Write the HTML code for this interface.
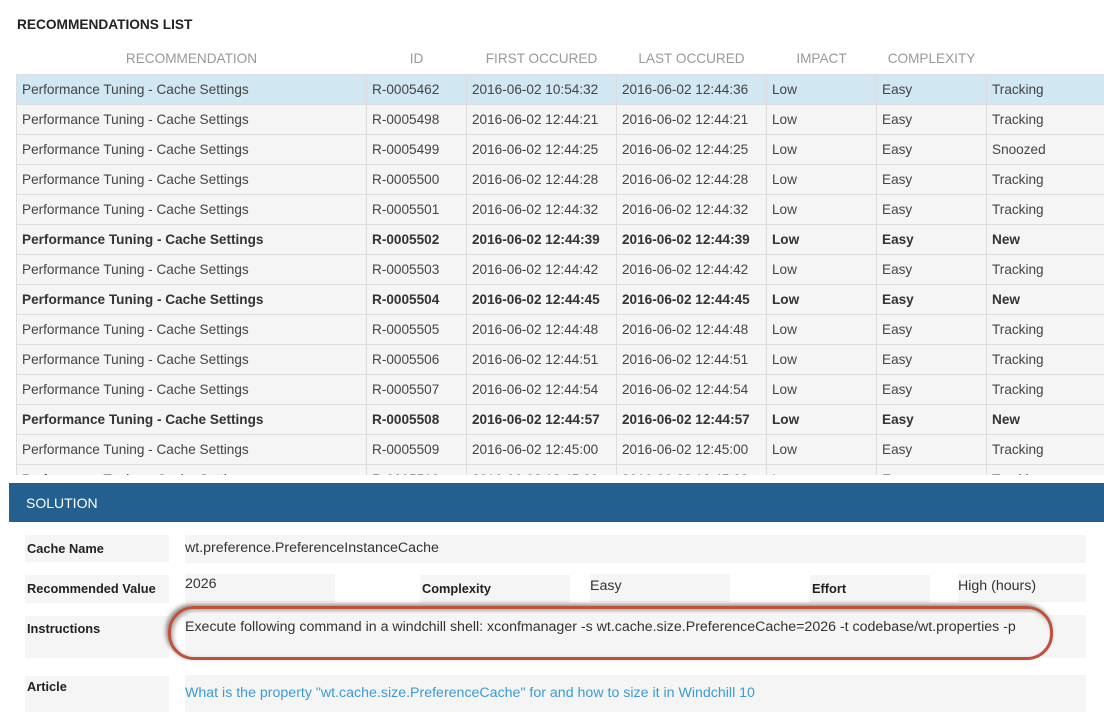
<!DOCTYPE html>
<html><head><meta charset="utf-8"><style>
*{margin:0;padding:0;box-sizing:border-box}
body{width:1104px;height:718px;background:#fff;font-family:"Liberation Sans",sans-serif;color:#333;position:relative;overflow:hidden}
.t{position:absolute;left:17px;top:17px;font-weight:bold;font-size:13.7px;color:#222}
.wrap{position:absolute;left:16px;top:44px;width:1088px;height:431px;overflow:hidden}
table{border-collapse:collapse;width:1088px;table-layout:fixed;font-size:13.6px}
th{font-weight:normal;color:#999;height:30px;text-align:center;font-size:13.6px}
td{height:30px;padding-left:5px;background:#f5f5f5;border:1px solid #ddd;color:#444;white-space:nowrap;overflow:hidden}
tr.sel td{background:#d1e7f1}
tr.b td{font-weight:bold;color:#333}
.bar{position:absolute;left:9px;top:483px;width:1095px;height:39px;background:#23608f;color:#fff;font-size:14px;padding:12px 0 0 17px}
.box{position:absolute;background:#f5f5f5;font-size:14.2px;color:#333;white-space:nowrap}
.lb{font-weight:bold;font-size:12.8px;color:#222;padding-left:2px}
a{color:#3a9bd5;text-decoration:none}
.oval{position:absolute;left:168px;top:606px;width:885px;height:54px;border:3px solid #c0503a;border-radius:26px;box-shadow:-2px -2px 4px rgba(0,0,0,.45),inset 2px 2px 4px rgba(0,0,0,.35)}
</style></head><body>
<div class="t">RECOMMENDATIONS LIST</div>
<div class="wrap"><table>
<colgroup><col style="width:350px"><col style="width:100px"><col style="width:150px"><col style="width:150px"><col style="width:110px"><col style="width:110px"><col style="width:118px"></colgroup>
<tr><th>RECOMMENDATION</th><th>ID</th><th>FIRST OCCURED</th><th>LAST OCCURED</th><th>IMPACT</th><th>COMPLEXITY</th><th></th></tr>
<tr class="sel"><td>Performance Tuning - Cache Settings</td><td>R-0005462</td><td>2016-06-02 10:54:32</td><td>2016-06-02 12:44:36</td><td>Low</td><td>Easy</td><td>Tracking</td></tr>
<tr><td>Performance Tuning - Cache Settings</td><td>R-0005498</td><td>2016-06-02 12:44:21</td><td>2016-06-02 12:44:21</td><td>Low</td><td>Easy</td><td>Tracking</td></tr>
<tr><td>Performance Tuning - Cache Settings</td><td>R-0005499</td><td>2016-06-02 12:44:25</td><td>2016-06-02 12:44:25</td><td>Low</td><td>Easy</td><td>Snoozed</td></tr>
<tr><td>Performance Tuning - Cache Settings</td><td>R-0005500</td><td>2016-06-02 12:44:28</td><td>2016-06-02 12:44:28</td><td>Low</td><td>Easy</td><td>Tracking</td></tr>
<tr><td>Performance Tuning - Cache Settings</td><td>R-0005501</td><td>2016-06-02 12:44:32</td><td>2016-06-02 12:44:32</td><td>Low</td><td>Easy</td><td>Tracking</td></tr>
<tr class="b"><td>Performance Tuning - Cache Settings</td><td>R-0005502</td><td>2016-06-02 12:44:39</td><td>2016-06-02 12:44:39</td><td>Low</td><td>Easy</td><td>New</td></tr>
<tr><td>Performance Tuning - Cache Settings</td><td>R-0005503</td><td>2016-06-02 12:44:42</td><td>2016-06-02 12:44:42</td><td>Low</td><td>Easy</td><td>Tracking</td></tr>
<tr class="b"><td>Performance Tuning - Cache Settings</td><td>R-0005504</td><td>2016-06-02 12:44:45</td><td>2016-06-02 12:44:45</td><td>Low</td><td>Easy</td><td>New</td></tr>
<tr><td>Performance Tuning - Cache Settings</td><td>R-0005505</td><td>2016-06-02 12:44:48</td><td>2016-06-02 12:44:48</td><td>Low</td><td>Easy</td><td>Tracking</td></tr>
<tr><td>Performance Tuning - Cache Settings</td><td>R-0005506</td><td>2016-06-02 12:44:51</td><td>2016-06-02 12:44:51</td><td>Low</td><td>Easy</td><td>Tracking</td></tr>
<tr><td>Performance Tuning - Cache Settings</td><td>R-0005507</td><td>2016-06-02 12:44:54</td><td>2016-06-02 12:44:54</td><td>Low</td><td>Easy</td><td>Tracking</td></tr>
<tr class="b"><td>Performance Tuning - Cache Settings</td><td>R-0005508</td><td>2016-06-02 12:44:57</td><td>2016-06-02 12:44:57</td><td>Low</td><td>Easy</td><td>New</td></tr>
<tr><td>Performance Tuning - Cache Settings</td><td>R-0005509</td><td>2016-06-02 12:45:00</td><td>2016-06-02 12:45:00</td><td>Low</td><td>Easy</td><td>Tracking</td></tr>
<tr><td>Performance Tuning - Cache Settings</td><td>R-0005510</td><td>2016-06-02 12:45:03</td><td>2016-06-02 12:45:03</td><td>Low</td><td>Easy</td><td>Tracking</td></tr>
</table></div>
<div class="bar">SOLUTION</div>

<div class="box lb" style="left:25px;top:535px;width:144px;height:27px;padding-top:6px">Cache Name</div>
<div class="box" style="left:185px;top:535px;width:901px;height:28px;padding-top:5px">wt.preference.PreferenceInstanceCache</div>

<div class="box lb" style="left:25px;top:575px;width:144px;height:28px;padding-top:6px">Recommended Value</div>
<div class="box" style="left:185px;top:574px;width:150px;height:28px;padding-top:2px">2026</div>
<div class="box lb" style="left:420px;top:575px;width:150px;height:28px;padding-top:6px">Complexity</div>
<div class="box" style="left:590px;top:574px;width:140px;height:28px;padding-top:4px">Easy</div>
<div class="box lb" style="left:810px;top:575px;width:120px;height:28px;padding-top:6px">Effort</div>
<div class="box" style="left:958px;top:574px;width:128px;height:28px;padding-top:4px">High (hours)</div>

<div class="box lb" style="left:25px;top:616px;width:144px;height:42px;padding-top:5px">Instructions</div>
<div class="box" style="left:185px;top:615px;width:901px;height:43px;padding-top:4px">Execute following command in a windchill shell: xconfmanager -s wt.cache.size.PreferenceCache=2026 -t codebase/wt.properties -p</div>
<div class="oval"></div>

<div class="box lb" style="left:25px;top:676px;width:144px;height:36px;padding-top:3px">Article</div>
<div class="box" style="left:185px;top:675px;width:901px;height:37px;padding-top:10px"><a>What is the property "wt.cache.size.PreferenceCache" for and how to size it in Windchill 10</a></div>
</body></html>
